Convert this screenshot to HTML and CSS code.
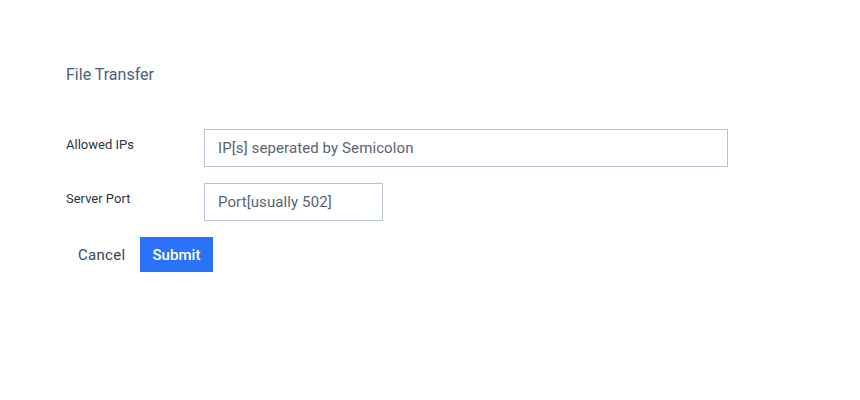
FILE: index.html
```html
<!DOCTYPE html>
<html>
<head>
<meta charset="utf-8">
<link rel="stylesheet" href="styles.css">
</head>
<body>
<div class="page">
  <h1 class="title">File Transfer</h1>
  <form class="form">
    <div class="row">
      <label class="label">Allowed IPs</label>
      <input class="input input-wide" type="text" placeholder="IP[s] seperated by Semicolon">
    </div>
    <div class="row">
      <label class="label">Server Port</label>
      <input class="input input-short" type="text" placeholder="Port[usually 502]">
    </div>
    <div class="actions">
      <button type="button" class="btn btn-cancel">Cancel</button>
      <button type="button" class="btn btn-submit">Submit</button>
    </div>
  </form>
</div>
</body>
</html>
```
FILE: styles.css
```css
* { box-sizing: border-box; }
html, body {
  margin: 0;
  padding: 0;
  background: #ffffff;
  font-family: Roboto, "Liberation Sans", sans-serif;
}
.page {
  padding: 65px 0 0 66px;
}
.title {
  margin: 0;
  font-size: 16px;
  font-weight: 400;
  line-height: 20px;
  color: #4b5f7c;
}
.form {
  margin-top: 44px;
  display: flex;
  flex-direction: column;
  gap: 16px;
}
.row {
  display: flex;
  align-items: flex-start;
}
.label {
  width: 138px;
  padding-top: 7px;
  font-size: 13px;
  line-height: 17px;
  color: #2f3542;
}
.input {
  height: 38px;
  border: 1px solid #b9c3d6;
  border-radius: 0;
  padding: 0 13px;
  font-family: inherit;
  font-size: 15px;
  letter-spacing: 0.1px;
  color: #333;
  outline: none;
  background: #fff;
}
.input::placeholder {
  color: #5a6373;
  opacity: 1;
}
.input-wide { width: 524px; }
.input-short { width: 179px; }
.actions {
  display: flex;
  gap: 3px;
}
.btn {
  height: 35px;
  border: none;
  border-radius: 0;
  font-family: inherit;
  font-size: 15px;
  padding: 0 12px;
  cursor: pointer;
}
.btn-cancel {
  background: transparent;
  color: #3a4457;
  letter-spacing: 0.3px;
}
.btn-submit {
  background: #2a73f8;
  color: #ffffff;
  font-weight: 500;
  letter-spacing: 0.05px;
}
```
